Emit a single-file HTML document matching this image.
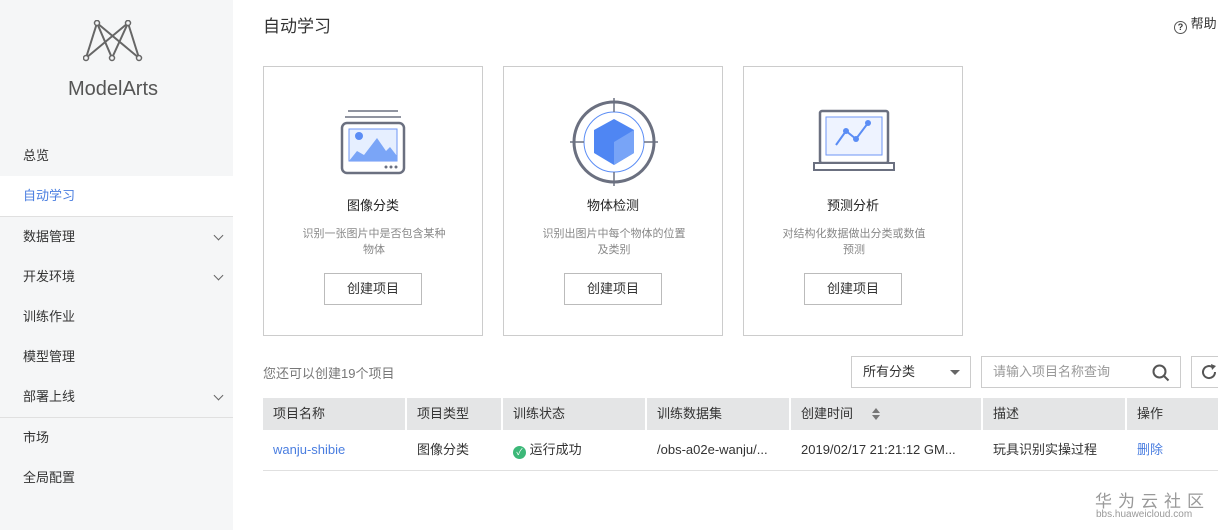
<!DOCTYPE html>
<html><head><meta charset="utf-8"><style>
*{margin:0;padding:0;box-sizing:border-box}
body{width:1218px;height:530px;overflow:hidden;background:#fff;font-family:"Liberation Sans","Noto Sans CJK SC",sans-serif;color:#333;position:relative;font-size:13px}
.side{position:absolute;left:0;top:0;width:233px;height:530px;background:#f5f6f7}
.nav{position:absolute;left:0;width:233px;height:40px;line-height:40px;padding-left:23px;font-size:13px;color:#333}
.nav .ch{position:absolute;right:11px;top:15px;width:7px;height:7px;border-right:1.3px solid #666;border-bottom:1.3px solid #666;transform:rotate(45deg)}
.abs{position:absolute}
.card{position:absolute;top:66px;width:220px;height:270px;border:1px solid #ccc;background:#fff;text-align:center}
.card .t{position:absolute;top:128px;width:100%;font-size:13px;color:#222}
.card .d{position:absolute;top:159px;left:35px;width:150px;font-size:11px;color:#888;line-height:16px}
.card .b{position:absolute;top:206px;left:60px;width:98px;height:32px;border:1px solid #bbb;line-height:30px;font-size:13px}
.th{position:absolute;top:398px;height:32px;background:#e4e5e6;line-height:32px;padding-left:10px;font-size:13px;color:#333}
.td{position:absolute;top:430px;height:40px;line-height:40px;padding-left:10px;font-size:13px;color:#333;white-space:nowrap}
</style></head><body>
<div class="side">
<svg class="abs" style="left:83px;top:20px" width="60" height="42" viewBox="0 0 60 42"><g stroke="#666" stroke-width="2" fill="none"><line x1="14" y1="3" x2="3" y2="38"/><line x1="14" y1="3" x2="29" y2="38"/><line x1="14" y1="3" x2="56" y2="38"/><line x1="45" y1="3" x2="29" y2="38"/><line x1="45" y1="3" x2="56" y2="38"/><line x1="45" y1="3" x2="3" y2="38"/></g><g fill="#f5f6f7" stroke="#666" stroke-width="1.5"><circle cx="14" cy="3" r="2.5"/><circle cx="45" cy="3" r="2.5"/><circle cx="3" cy="38" r="2.5"/><circle cx="29" cy="38" r="2.5"/><circle cx="56" cy="38" r="2.5"/></g></svg>
<div class="abs" style="left:0;width:226px;top:78px;text-align:center;font-size:20px;color:#555">ModelArts</div>
<div class="nav" style="top:136px">总览</div>
<div class="nav" style="top:176px;background:#fff;color:#4a7ee0">自动学习</div>
<div class="abs" style="top:216px;width:233px;border-top:1px solid #e0e0e0"></div>
<div class="nav" style="top:217px">数据管理<i class="ch"></i></div>
<div class="nav" style="top:257px">开发环境<i class="ch"></i></div>
<div class="nav" style="top:297px">训练作业</div>
<div class="nav" style="top:337px">模型管理</div>
<div class="nav" style="top:377px">部署上线<i class="ch"></i></div>
<div class="abs" style="top:417px;width:233px;border-top:1px solid #e0e0e0"></div>
<div class="nav" style="top:418px">市场</div>
<div class="nav" style="top:458px">全局配置</div>
</div>
<div class="abs" style="left:263px;top:12px;font-size:17px;color:#333">自动学习</div>
<div class="abs" style="left:1174px;top:13px;font-size:13px;color:#333;white-space:nowrap"><span style="display:inline-block;width:13px;height:13px;border:1.5px solid #555;border-radius:50%;font-size:9px;line-height:10px;text-align:center;font-weight:bold;vertical-align:-2px">?</span> 帮助</div>

<div class="card" style="left:263px">
<svg class="abs" style="left:76px;top:42px" width="66" height="66" viewBox="0 0 66 66"><g stroke="#6b7080" stroke-width="1.5"><line x1="8" y1="2" x2="58" y2="2"/><line x1="5" y1="8" x2="61" y2="8"/></g><rect x="2" y="14" width="62" height="50" rx="5" fill="#fff" stroke="#6b7080" stroke-width="2.5"/><rect x="9" y="20" width="48" height="32" fill="#e6efff" stroke="#6e96f5"/><circle cx="19" cy="27" r="4" fill="#5b8df5"/><path d="M9 52 L17 42 L24 46 L37 29 L46 42 L50 38 L57 47 V52 Z" fill="#7aa5f7"/><g fill="#6b7080"><circle cx="46" cy="58" r="1.5"/><circle cx="51" cy="58" r="1.5"/><circle cx="56" cy="58" r="1.5"/></g></svg>
<div class="t">图像分类</div><div class="d">识别一张图片中是否包含某种物体</div><div class="b">创建项目</div></div>

<div class="card" style="left:503px">
<svg class="abs" style="left:66px;top:31px" width="88" height="88" viewBox="0 0 88 88"><circle cx="44" cy="44" r="40" fill="none" stroke="#6b7080" stroke-width="3"/><circle cx="44" cy="44" r="30" fill="none" stroke="#5b8df5" stroke-width="1"/><g stroke="#6b7080" stroke-width="1.5"><line x1="44" y1="0" x2="44" y2="14"/><line x1="44" y1="74" x2="44" y2="88"/><line x1="0" y1="44" x2="14" y2="44"/><line x1="74" y1="44" x2="88" y2="44"/></g><path d="M44 21 L64 32 L64 55 L44 67 L24 55 L24 32 Z" fill="#4f86f3"/><path d="M44 44 L64 32 L64 55 L44 67 Z" fill="#78a4f7"/></svg>
<div class="t">物体检测</div><div class="d">识别出图片中每个物体的位置及类别</div><div class="b">创建项目</div></div>

<div class="card" style="left:743px">
<svg class="abs" style="left:68px;top:42px" width="84" height="64" viewBox="0 0 84 64"><rect x="8" y="2" width="68" height="52" rx="2" fill="#fff" stroke="#6b7080" stroke-width="2.5"/><rect x="14" y="8" width="56" height="38" fill="#eef3ff" stroke="#6e96f5"/><path d="M24 36 L34 22 L44 30 L56 14" fill="none" stroke="#5b8df5" stroke-width="2"/><g fill="#5b8df5"><circle cx="34" cy="22" r="3"/><circle cx="44" cy="30" r="3"/><circle cx="56" cy="14" r="3"/></g><rect x="2" y="54" width="80" height="7" fill="#fff" stroke="#6b7080" stroke-width="2"/></svg>
<div class="t">预测分析</div><div class="d">对结构化数据做出分类或数值预测</div><div class="b">创建项目</div></div>

<div class="abs" style="left:263px;top:363px;font-size:13px;color:#777">您还可以创建19个项目</div>
<div class="abs" style="left:851px;top:356px;width:120px;height:32px;border:1px solid #ccc;line-height:30px;padding-left:11px">所有分类<span style="position:absolute;right:10px;top:13px;border:5px solid transparent;border-top:5px solid #666"></span></div>
<div class="abs" style="left:981px;top:356px;width:200px;height:32px;border:1px solid #ccc;line-height:30px;padding-left:11px;color:#999">请输入项目名称查询
<svg class="abs" style="right:10px;top:7px" width="18" height="18" viewBox="0 0 18 18"><circle cx="7.5" cy="7.5" r="6" fill="none" stroke="#555" stroke-width="2"/><line x1="12" y1="12" x2="16.5" y2="16.5" stroke="#555" stroke-width="2"/></svg></div>
<div class="abs" style="left:1191px;top:356px;width:40px;height:32px;border:1px solid #ccc"><svg class="abs" style="left:8px;top:6px" width="18" height="18" viewBox="0 0 18 18"><path d="M15 9 A6 6 0 1 1 12.5 4.2" fill="none" stroke="#555" stroke-width="2"/><path d="M11 1 L16 3 L12 7 Z" fill="#555"/></svg></div>

<div class="th" style="left:263px;width:142px">项目名称</div>
<div class="th" style="left:407px;width:94px">项目类型</div>
<div class="th" style="left:503px;width:142px">训练状态</div>
<div class="th" style="left:647px;width:142px">训练数据集</div>
<div class="th" style="left:791px;width:190px">创建时间<svg class="abs" style="left:81px;top:10px" width="8" height="12" viewBox="0 0 8 12"><path d="M4 0 L8 5 H0 Z M4 12 L8 7 H0 Z" fill="#777"/></svg></div>
<div class="th" style="left:983px;width:142px">描述</div>
<div class="th" style="left:1127px;width:91px">操作</div>
<div class="td" style="left:263px;color:#4a7ee0">wanju-shibie</div>
<div class="td" style="left:407px">图像分类</div>
<div class="td" style="left:503px"><span style="display:inline-block;width:13px;height:13px;border-radius:50%;background:#3cb878;color:#fff;font-size:9px;line-height:13px;text-align:center;vertical-align:-1px">✓</span> 运行成功</div>
<div class="td" style="left:647px">/obs-a02e-wanju/...</div>
<div class="td" style="left:791px">2019/02/17 21:21:12 GM...</div>
<div class="td" style="left:983px">玩具识别实操过程</div>
<div class="td" style="left:1127px;color:#4a7ee0">删除</div>
<div class="abs" style="left:263px;top:470px;width:955px;border-top:1px solid #e0e0e0"></div>
<div class="abs" style="left:1095px;top:487px;font-size:17px;color:#999;letter-spacing:6px;white-space:nowrap">华为云社区</div>
<div class="abs" style="left:1096px;top:509px;font-size:10px;color:#999;white-space:nowrap">bbs.huaweicloud.com</div>
</body></html>
